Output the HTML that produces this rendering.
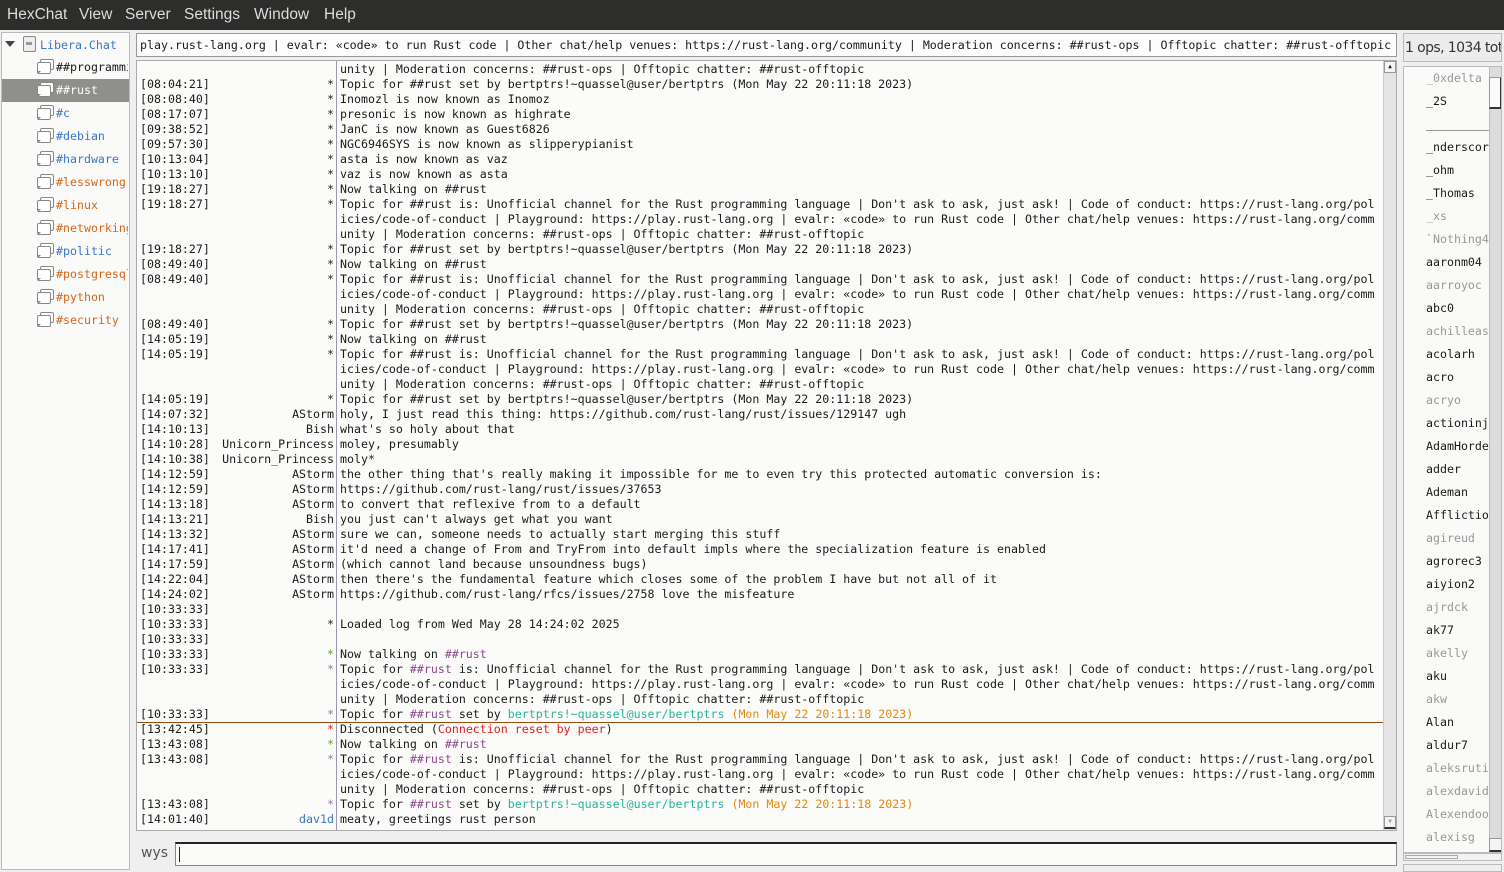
<!DOCTYPE html>
<html><head><meta charset="utf-8"><style>
*{margin:0;padding:0;box-sizing:border-box}
body{width:1504px;height:872px;background:#efefef;position:relative;overflow:hidden;font-family:"DejaVu Sans Mono","Liberation Mono",monospace;font-size:11.62px;color:#1a1a1a}
#menu{position:absolute;left:0;top:0;width:1504px;height:30px;background:#2d2d2b;color:#dcdcdc;font-family:"Liberation Sans",sans-serif;font-size:15.5px}
#menu span{position:absolute;top:6px}
#tree{position:absolute;left:1px;top:32px;width:129px;height:838px;background:#fafaf9;border:1px solid #bbb;font-size:11.62px;overflow:hidden}
.ti{position:absolute;height:22px;line-height:22px;white-space:nowrap;overflow:hidden;width:72px}
.ic{position:absolute;left:38px;width:14px;height:11px;border:1.5px solid #888;border-radius:2px;background:#fff}
.ic:before{content:"";position:absolute;left:-4px;top:2px;width:12px;height:10px;border:1.5px solid #888;border-radius:2px;background:#fff}
.ic:after{content:"";position:absolute;left:-3px;top:11px;width:0;height:0;border-left:3px solid #888;border-bottom:3px solid transparent}
.b{color:#3a76c4}.o{color:#d4661a}
#topic{position:absolute;left:136px;top:33px;width:1261px;height:24px;background:#fdfdfd;border:1px solid #999;line-height:22px;padding-left:3px;white-space:nowrap;overflow:hidden}
#chat{position:absolute;left:136px;top:60px;width:1261px;height:771px;background:#fbfbfa;border:1px solid #aaa;overflow:hidden}
#sep{position:absolute;left:199px;top:0;width:1px;height:771px;background:#9a9aa8}
.l{position:absolute;height:15px;line-height:15px;white-space:pre;left:0}
.t{position:absolute;left:3px}
.n{position:absolute;text-align:right}
.x{position:absolute;left:203px}
.p{color:#8a4a8a}.g{color:#28b49c}.d{color:#e08a10}.r{color:#e02020}.gr{color:#5aa02a}.s{color:#8a7a9a}.bl{color:#3a76c4}
#vs{position:absolute;left:1383px;top:61px;width:13px;height:769px;background:#e4e4e4;border-left:1px solid #ccc}
#inp{position:absolute;left:175px;top:842px;width:1222px;height:24px;background:#fbfbfa;border:1px solid #888;border-top:2px solid #222}
#cnt{position:absolute;left:1403px;top:33px;width:99px;height:29px;border:1px solid #bbb;background:#ececec;font-family:"DejaVu Sans","Liberation Sans",sans-serif;font-size:14px;line-height:29px;padding-left:1px;white-space:nowrap;overflow:hidden;color:#333;letter-spacing:-0.6px}
#ul{position:absolute;left:1403px;top:66px;width:99px;height:787px;background:#fafaf9;border:1px solid #bbb;overflow:hidden;font-size:11.62px}
#ul div{position:absolute;left:22px;white-space:nowrap;height:23px;line-height:23px}
.a{color:#999}
</style></head><body>
<div id="menu"><span style="left:7px">HexChat</span><span style="left:79px">View</span><span style="left:125px">Server</span><span style="left:184px">Settings</span><span style="left:254px">Window</span><span style="left:324px">Help</span></div>

<div id="tree">
<div style="position:absolute;left:3px;top:8px;width:0;height:0;border-left:5px solid transparent;border-right:5px solid transparent;border-top:6px solid #444"></div>
<div style="position:absolute;left:21px;top:3px;width:13px;height:16px;border:1.5px solid #888;border-radius:2px;background:#eee"><div style="position:absolute;left:2px;top:5px;width:6px;height:3px;background:#999"></div></div>
<div class="ti b" style="left:38px;top:1px;width:85px">Libera.Chat</div>
<div class="ic" style="top:26px"></div><div class="ti" style="left:54px;top:23px">##programming</div>
<div style="position:absolute;left:0;top:46px;width:127px;height:23px;background:#8f8f8b"></div>
<div class="ic" style="top:49px"></div><div class="ti" style="left:54px;top:46px;color:#fff">##rust</div>
<div class="ic" style="top:72px"></div><div class="ti b" style="left:54px;top:69px">#c</div>
<div class="ic" style="top:95px"></div><div class="ti b" style="left:54px;top:92px">#debian</div>
<div class="ic" style="top:118px"></div><div class="ti b" style="left:54px;top:115px">#hardware</div>
<div class="ic" style="top:141px"></div><div class="ti o" style="left:54px;top:138px">#lesswrong</div>
<div class="ic" style="top:164px"></div><div class="ti o" style="left:54px;top:161px">#linux</div>
<div class="ic" style="top:187px"></div><div class="ti o" style="left:54px;top:184px">#networking</div>
<div class="ic" style="top:210px"></div><div class="ti b" style="left:54px;top:207px">#politic</div>
<div class="ic" style="top:233px"></div><div class="ti o" style="left:54px;top:230px">#postgresql</div>
<div class="ic" style="top:256px"></div><div class="ti o" style="left:54px;top:253px">#python</div>
<div class="ic" style="top:279px"></div><div class="ti o" style="left:54px;top:276px">#security</div>
</div>

<div id="topic">play.rust-lang.org | evalr: «code» to run Rust code | Other chat/help venues: https://rust-lang.org/community | Moderation concerns: ##rust-ops | Offtopic chatter: ##rust-offtopic</div>

<div id="chat"><div id="sep"></div>
<div class="l" style="top:1px"><span class="x">unity | Moderation concerns: ##rust-ops | Offtopic chatter: ##rust-offtopic</span></div>
<div class="l" style="top:16px"><span class="t">[08:04:21]</span><span class="n" style="left:0;width:197px">*</span><span class="x">Topic for ##rust set by bertptrs!~quassel@user/bertptrs (Mon May 22 20:11:18 2023)</span></div>
<div class="l" style="top:31px"><span class="t">[08:08:40]</span><span class="n" style="left:0;width:197px">*</span><span class="x">Inomozl is now known as Inomoz</span></div>
<div class="l" style="top:46px"><span class="t">[08:17:07]</span><span class="n" style="left:0;width:197px">*</span><span class="x">presonic is now known as highrate</span></div>
<div class="l" style="top:61px"><span class="t">[09:38:52]</span><span class="n" style="left:0;width:197px">*</span><span class="x">JanC is now known as Guest6826</span></div>
<div class="l" style="top:76px"><span class="t">[09:57:30]</span><span class="n" style="left:0;width:197px">*</span><span class="x">NGC6946SYS is now known as slipperypianist</span></div>
<div class="l" style="top:91px"><span class="t">[10:13:04]</span><span class="n" style="left:0;width:197px">*</span><span class="x">asta is now known as vaz</span></div>
<div class="l" style="top:106px"><span class="t">[10:13:10]</span><span class="n" style="left:0;width:197px">*</span><span class="x">vaz is now known as asta</span></div>
<div class="l" style="top:121px"><span class="t">[19:18:27]</span><span class="n" style="left:0;width:197px">*</span><span class="x">Now talking on ##rust</span></div>
<div class="l" style="top:136px"><span class="t">[19:18:27]</span><span class="n" style="left:0;width:197px">*</span><span class="x">Topic for ##rust is: Unofficial channel for the Rust programming language | Don't ask to ask, just ask! | Code of conduct: https://rust-lang.org/pol</span></div>
<div class="l" style="top:151px"><span class="x">icies/code-of-conduct | Playground: https://play.rust-lang.org | evalr: «code» to run Rust code | Other chat/help venues: https://rust-lang.org/comm</span></div>
<div class="l" style="top:166px"><span class="x">unity | Moderation concerns: ##rust-ops | Offtopic chatter: ##rust-offtopic</span></div>
<div class="l" style="top:181px"><span class="t">[19:18:27]</span><span class="n" style="left:0;width:197px">*</span><span class="x">Topic for ##rust set by bertptrs!~quassel@user/bertptrs (Mon May 22 20:11:18 2023)</span></div>
<div class="l" style="top:196px"><span class="t">[08:49:40]</span><span class="n" style="left:0;width:197px">*</span><span class="x">Now talking on ##rust</span></div>
<div class="l" style="top:211px"><span class="t">[08:49:40]</span><span class="n" style="left:0;width:197px">*</span><span class="x">Topic for ##rust is: Unofficial channel for the Rust programming language | Don't ask to ask, just ask! | Code of conduct: https://rust-lang.org/pol</span></div>
<div class="l" style="top:226px"><span class="x">icies/code-of-conduct | Playground: https://play.rust-lang.org | evalr: «code» to run Rust code | Other chat/help venues: https://rust-lang.org/comm</span></div>
<div class="l" style="top:241px"><span class="x">unity | Moderation concerns: ##rust-ops | Offtopic chatter: ##rust-offtopic</span></div>
<div class="l" style="top:256px"><span class="t">[08:49:40]</span><span class="n" style="left:0;width:197px">*</span><span class="x">Topic for ##rust set by bertptrs!~quassel@user/bertptrs (Mon May 22 20:11:18 2023)</span></div>
<div class="l" style="top:271px"><span class="t">[14:05:19]</span><span class="n" style="left:0;width:197px">*</span><span class="x">Now talking on ##rust</span></div>
<div class="l" style="top:286px"><span class="t">[14:05:19]</span><span class="n" style="left:0;width:197px">*</span><span class="x">Topic for ##rust is: Unofficial channel for the Rust programming language | Don't ask to ask, just ask! | Code of conduct: https://rust-lang.org/pol</span></div>
<div class="l" style="top:301px"><span class="x">icies/code-of-conduct | Playground: https://play.rust-lang.org | evalr: «code» to run Rust code | Other chat/help venues: https://rust-lang.org/comm</span></div>
<div class="l" style="top:316px"><span class="x">unity | Moderation concerns: ##rust-ops | Offtopic chatter: ##rust-offtopic</span></div>
<div class="l" style="top:331px"><span class="t">[14:05:19]</span><span class="n" style="left:0;width:197px">*</span><span class="x">Topic for ##rust set by bertptrs!~quassel@user/bertptrs (Mon May 22 20:11:18 2023)</span></div>
<div class="l" style="top:346px"><span class="t">[14:07:32]</span><span class="n" style="left:0;width:197px">AStorm</span><span class="x">holy, I just read this thing: https://github.com/rust-lang/rust/issues/129147 ugh</span></div>
<div class="l" style="top:361px"><span class="t">[14:10:13]</span><span class="n" style="left:0;width:197px">Bish</span><span class="x">what's so holy about that</span></div>
<div class="l" style="top:376px"><span class="t">[14:10:28]</span><span class="n" style="left:0;width:197px">Unicorn_Princess</span><span class="x">moley, presumably</span></div>
<div class="l" style="top:391px"><span class="t">[14:10:38]</span><span class="n" style="left:0;width:197px">Unicorn_Princess</span><span class="x">moly*</span></div>
<div class="l" style="top:406px"><span class="t">[14:12:59]</span><span class="n" style="left:0;width:197px">AStorm</span><span class="x">the other thing that's really making it impossible for me to even try this protected automatic conversion is:</span></div>
<div class="l" style="top:421px"><span class="t">[14:12:59]</span><span class="n" style="left:0;width:197px">AStorm</span><span class="x">https://github.com/rust-lang/rust/issues/37653</span></div>
<div class="l" style="top:436px"><span class="t">[14:13:18]</span><span class="n" style="left:0;width:197px">AStorm</span><span class="x">to convert that reflexive from to a default</span></div>
<div class="l" style="top:451px"><span class="t">[14:13:21]</span><span class="n" style="left:0;width:197px">Bish</span><span class="x">you just can't always get what you want</span></div>
<div class="l" style="top:466px"><span class="t">[14:13:32]</span><span class="n" style="left:0;width:197px">AStorm</span><span class="x">sure we can, someone needs to actually start merging this stuff</span></div>
<div class="l" style="top:481px"><span class="t">[14:17:41]</span><span class="n" style="left:0;width:197px">AStorm</span><span class="x">it'd need a change of From and TryFrom into default impls where the specialization feature is enabled</span></div>
<div class="l" style="top:496px"><span class="t">[14:17:59]</span><span class="n" style="left:0;width:197px">AStorm</span><span class="x">(which cannot land because unsoundness bugs)</span></div>
<div class="l" style="top:511px"><span class="t">[14:22:04]</span><span class="n" style="left:0;width:197px">AStorm</span><span class="x">then there's the fundamental feature which closes some of the problem I have but not all of it</span></div>
<div class="l" style="top:526px"><span class="t">[14:24:02]</span><span class="n" style="left:0;width:197px">AStorm</span><span class="x">https://github.com/rust-lang/rfcs/issues/2758 love the misfeature</span></div>
<div class="l" style="top:541px"><span class="t">[10:33:33]</span></div>
<div class="l" style="top:556px"><span class="t">[10:33:33]</span><span class="n" style="left:0;width:197px">*</span><span class="x">Loaded log from Wed May 28 14:24:02 2025</span></div>
<div class="l" style="top:571px"><span class="t">[10:33:33]</span></div>
<div class="l" style="top:586px"><span class="t">[10:33:33]</span><span class="n gr" style="left:0;width:197px">*</span><span class="x">Now talking on <span class="p">##rust</span></span></div>
<div class="l" style="top:601px"><span class="t">[10:33:33]</span><span class="n s" style="left:0;width:197px">*</span><span class="x">Topic for <span class="p">##rust</span> is: Unofficial channel for the Rust programming language | Don't ask to ask, just ask! | Code of conduct: https://rust-lang.org/pol</span></div>
<div class="l" style="top:616px"><span class="x">icies/code-of-conduct | Playground: https://play.rust-lang.org | evalr: «code» to run Rust code | Other chat/help venues: https://rust-lang.org/comm</span></div>
<div class="l" style="top:631px"><span class="x">unity | Moderation concerns: ##rust-ops | Offtopic chatter: ##rust-offtopic</span></div>
<div class="l" style="top:646px"><span class="t">[10:33:33]</span><span class="n s" style="left:0;width:197px">*</span><span class="x">Topic for <span class="p">##rust</span> set by <span class="g">bertptrs!~quassel@user/bertptrs</span> <span class="d">(Mon May 22 20:11:18 2023)</span></span></div>
<div style="position:absolute;left:0;top:661px;width:1246px;height:1px;background:#9a4a10"></div>
<div class="l" style="top:661px"><span class="t">[13:42:45]</span><span class="n r" style="left:0;width:197px">*</span><span class="x">Disconnected (<span class="r">Connection reset by peer</span>)</span></div>
<div class="l" style="top:676px"><span class="t">[13:43:08]</span><span class="n gr" style="left:0;width:197px">*</span><span class="x">Now talking on <span class="p">##rust</span></span></div>
<div class="l" style="top:691px"><span class="t">[13:43:08]</span><span class="n s" style="left:0;width:197px">*</span><span class="x">Topic for <span class="p">##rust</span> is: Unofficial channel for the Rust programming language | Don't ask to ask, just ask! | Code of conduct: https://rust-lang.org/pol</span></div>
<div class="l" style="top:706px"><span class="x">icies/code-of-conduct | Playground: https://play.rust-lang.org | evalr: «code» to run Rust code | Other chat/help venues: https://rust-lang.org/comm</span></div>
<div class="l" style="top:721px"><span class="x">unity | Moderation concerns: ##rust-ops | Offtopic chatter: ##rust-offtopic</span></div>
<div class="l" style="top:736px"><span class="t">[13:43:08]</span><span class="n s" style="left:0;width:197px">*</span><span class="x">Topic for <span class="p">##rust</span> set by <span class="g">bertptrs!~quassel@user/bertptrs</span> <span class="d">(Mon May 22 20:11:18 2023)</span></span></div>
<div class="l" style="top:751px"><span class="t">[14:01:40]</span><span class="n bl" style="left:0;width:197px">dav1d</span><span class="x">meaty, greetings rust person</span></div>
</div>
<div id="vs"><div style="position:absolute;left:0;top:0;width:12px;height:12px;background:#f4f4f4;border:1px solid #999;font-size:6px;text-align:center;line-height:10px">▲</div><div style="position:absolute;left:0;top:755px;width:12px;height:13px;background:#f4f4f4;border:1px solid #999;border-bottom:2px solid #333;font-size:6px;text-align:center;line-height:10px;color:#999">▼</div></div>

<div style="position:absolute;left:141px;top:845px;font-family:'DejaVu Sans','Liberation Sans',sans-serif;font-size:14px;color:#555">wys</div>
<div id="inp"><div style="position:absolute;left:3px;top:3px;width:1px;height:15px;background:#222"></div></div>

<div id="cnt">1 ops, 1034 total</div>
<div id="ul">
<div class="a" style="top:0">_0xdelta</div>
<div style="top:23px">_2S</div>
<div style="top:46px">__________</div>
<div style="top:69px">_nderscore</div>
<div style="top:92px">_ohm</div>
<div style="top:115px">_Thomas</div>
<div class="a" style="top:138px">_xs</div>
<div class="a" style="top:161px">`Nothing4</div>
<div style="top:184px">aaronm04</div>
<div class="a" style="top:207px">aarroyoc</div>
<div style="top:230px">abc0</div>
<div class="a" style="top:253px">achilleas</div>
<div style="top:276px">acolarh</div>
<div style="top:299px">acro</div>
<div class="a" style="top:322px">acryo</div>
<div style="top:345px">actioninj</div>
<div style="top:368px">AdamHorde</div>
<div style="top:391px">adder</div>
<div style="top:414px">Ademan</div>
<div style="top:437px">Afflictio</div>
<div class="a" style="top:460px">agireud</div>
<div style="top:483px">agrorec3</div>
<div style="top:506px">aiyion2</div>
<div class="a" style="top:529px">ajrdck</div>
<div style="top:552px">ak77</div>
<div class="a" style="top:575px">akelly</div>
<div style="top:598px">aku</div>
<div class="a" style="top:621px">akw</div>
<div style="top:644px">Alan</div>
<div style="top:667px">aldur7</div>
<div class="a" style="top:690px">aleksruti</div>
<div class="a" style="top:713px">alexdavid</div>
<div class="a" style="top:736px">Alexendoo</div>
<div class="a" style="top:759px">alexisg</div>
<span style="position:absolute;left:85px;top:0;width:13px;height:787px;background:#dcdcdc;border-left:1px solid #bbb"></span>
<span style="position:absolute;left:85px;top:10px;width:13px;height:32px;background:#fafafa;border:1px solid #999;border-right:2px solid #333;border-bottom:2px solid #333"></span>
<span style="position:absolute;left:85px;top:771px;width:13px;height:14px;background:#f4f4f4;border:1px solid #999;border-bottom:2px solid #333"></span>
</div>
<div style="position:absolute;left:1403px;top:853px;width:99px;height:8px;border:1px solid #bbb;background:#f2f2f2"><div style="position:absolute;left:1px;top:1px;width:53px;height:4px;border:1px solid #aaa"></div></div>
<div style="position:absolute;left:1403px;top:864px;width:99px;height:8px;border:1px solid #bbb"></div>
</body></html>
